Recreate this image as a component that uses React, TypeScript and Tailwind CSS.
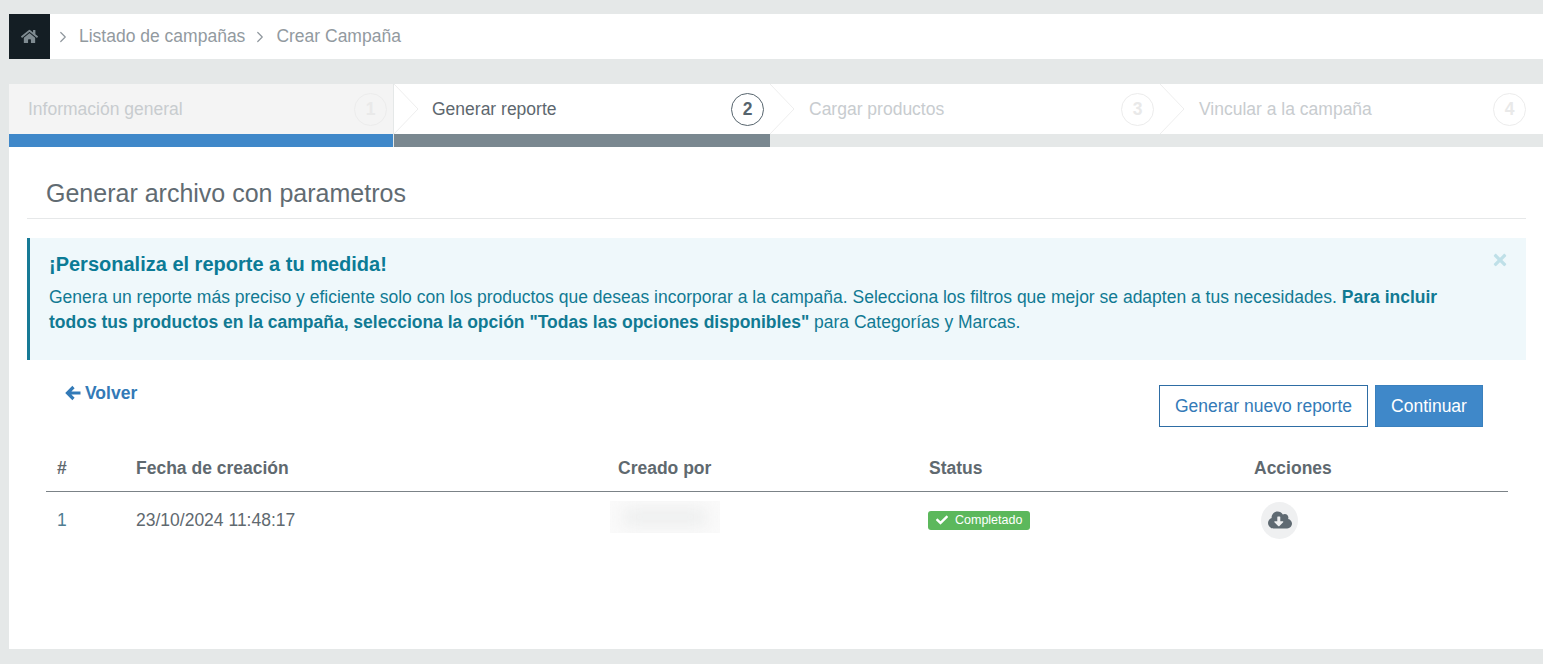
import React from "react";
import { ChevronRight } from "lucide-react";
import { FaCheck, FaCloudDownloadAlt, FaHome, FaTimes } from "react-icons/fa";

const steps = [
  { n: 1, label: "Información general", width: "w-[385px]", state: "done" },
  { n: 2, label: "Generar reporte", width: "w-[376px]", state: "active" },
  { n: 3, label: "Cargar productos", width: "w-[390px]", state: "todo" },
  { n: 4, label: "Vincular a la campaña", width: "flex-1", state: "todo" },
];

const Step = ({ step, index }: { step: (typeof steps)[number]; index: number }) => {
  const active = step.state === "active";
  return (
    <div className={`${step.width} flex flex-col`}>
      <div
        className={`relative flex h-[50px] items-center justify-between ${index === 3 ? "pr-[17px]" : "pr-[6px]"} ${
          step.state === "done"
            ? "bg-[#f4f4f4] mr-px pl-[19px]"
            : active
              ? "bg-white pl-[38px]"
              : "bg-white pl-[39px]"
        }`}
      >
        {index > 0 && (
          <svg className="absolute left-0 top-0 h-[50px] w-[26px]" viewBox="0 0 26 50" fill="none">
            <path d="M0 0L24 25L0 50" stroke="#eeeeee" />
          </svg>
        )}
        <span className={`text-[17.5px] ${active ? "text-[#5d676e]" : "text-[#c8cccf]"}`}>{step.label}</span>
        <span
          className={`flex h-[33px] w-[33px] items-center justify-center rounded-full border text-[17.5px] font-bold ${
            active ? "border-[#56646d] text-[#56646d]" : "border-[#ececec] text-[#e9e9e9]"
          }`}
        >
          {step.n}
        </span>
      </div>
      <div
        className={`h-[13px] ${
          step.state === "done" ? "bg-[#3f88c9] mr-px" : active ? "bg-[#7a8890]" : "bg-[#e5e8e8]"
        }`}
      />
    </div>
  );
};

export default function App() {
  return (
    <div className="min-h-[664px] bg-[#e5e8e8] pt-[14px] pb-[15px] pl-[9px] font-['Liberation_Sans',Arial,sans-serif]">
      {/* Breadcrumb */}
      <nav className="flex h-[45px] items-center bg-white text-[17.5px] text-[#929a9f]">
        <a className="flex h-full w-[41px] items-center justify-center bg-[#141e24] text-[#7f8b91]">
          <FaHome size={17} />
        </a>
        <ChevronRight size={18} className="ml-[4px] text-[#8f979d]" strokeWidth={1.6} />
        <span className="ml-[7px]">Listado de campañas</span>
        <ChevronRight size={18} className="ml-[6px] text-[#8f979d]" strokeWidth={1.6} />
        <span className="ml-[7px]">Crear Campaña</span>
      </nav>

      {/* Wizard */}
      <div className="mt-[25px] flex">
        {steps.map((step, i) => (
          <Step key={step.n} step={step} index={i} />
        ))}
      </div>

      <main className="h-[502px] bg-white pl-[18px] pr-[17px]">
        <h2 className="flex h-[72px] items-end border-b border-[#e6e8e9] pb-[8px] pl-[19px] text-[25px] leading-[34px] text-[#616b72]">
          Generar archivo con parametros
        </h2>

        {/* Alert */}
        <div className="relative mt-[19px] h-[122px] border-l-[3px] border-[#177a96] bg-[#eff8fb] pl-[19px] pt-[14px] text-[17.5px] leading-[25px] text-[#117a93]">
          <h4 className="text-[20px] font-bold leading-[24px] text-[#0b7b96]">¡Personaliza el reporte a tu medida!</h4>
          <p className="mt-[9px] w-[1400px]">
            Genera un reporte más preciso y eficiente solo con los productos que deseas incorporar a la campaña.
            Selecciona los filtros que mejor se adapten a tus necesidades.{" "}
            <b>
              Para incluir todos tus productos en la campaña, selecciona la opción "Todas las opciones disponibles"
            </b>{" "}
            para Categorías y Marcas.
          </p>
          <FaTimes size={18} className="absolute right-[17px] top-[13px] text-[#bfe0e8]" />
        </div>

        {/* Actions */}
        <div className="flex justify-between pl-[38px] pr-[43px] pt-[25px]">
          <a className="mt-[-3px] flex h-[22px] items-center gap-[4px] text-[17.5px] font-bold text-[#337ab7]">
            <svg width="16" height="16" viewBox="0 0 16 16" fill="none" stroke="currentColor" strokeWidth="3.2">
              <path d="M8.5 2L2.5 8L8.5 14M3 8H15.5" />
            </svg>
            Volver
          </a>
          <div className="flex gap-[7px] text-[17.5px]">
            <button className="h-[42px] w-[209px] border border-[#2e6da4] bg-white text-[#337ab7]">
              Generar nuevo reporte
            </button>
            <button className="h-[42px] w-[108px] border border-[#3a80bd] bg-[#3f88c9] text-white">Continuar</button>
          </div>
        </div>

        {/* Table */}
        <div className="ml-[19px] mr-[18px] mt-[19px] text-[17.5px] text-[#5f696f]">
          <div className="grid h-[46px] grid-cols-[79px_482px_311px_325px_1fr] items-center border-b border-[#7b8287] pl-[11px] font-bold">
            <span>#</span>
            <span>Fecha de creación</span>
            <span>Creado por</span>
            <span>Status</span>
            <span>Acciones</span>
          </div>
          <div className="grid h-[56px] grid-cols-[79px_482px_311px_325px_1fr] items-center pl-[11px]">
            <span className="text-[#4f7d92]">1</span>
            <span>23/10/2024 11:48:17</span>
            <span className="-ml-[8px] -mt-[6px] h-[32px] w-[110px] overflow-hidden bg-[#fafafa]">
              <span className="mx-[14px] mt-[8px] block h-[16px] w-[82px] bg-[#eceded] blur-[8px]" />
            </span>
            <span className="-ml-px flex h-[19px] w-[102px] items-center gap-[7px] rounded-[3px] bg-[#5cb85c] pl-[8px] text-[12.5px] text-white">
              <FaCheck size={12} />
              Completado
            </span>
            <span className="ml-[7px] flex h-[37px] w-[37px] items-center justify-center rounded-full bg-[#eff0f1] text-[#5f6a72]">
              <FaCloudDownloadAlt size={24} />
            </span>
          </div>
        </div>
      </main>
    </div>
  );
}
